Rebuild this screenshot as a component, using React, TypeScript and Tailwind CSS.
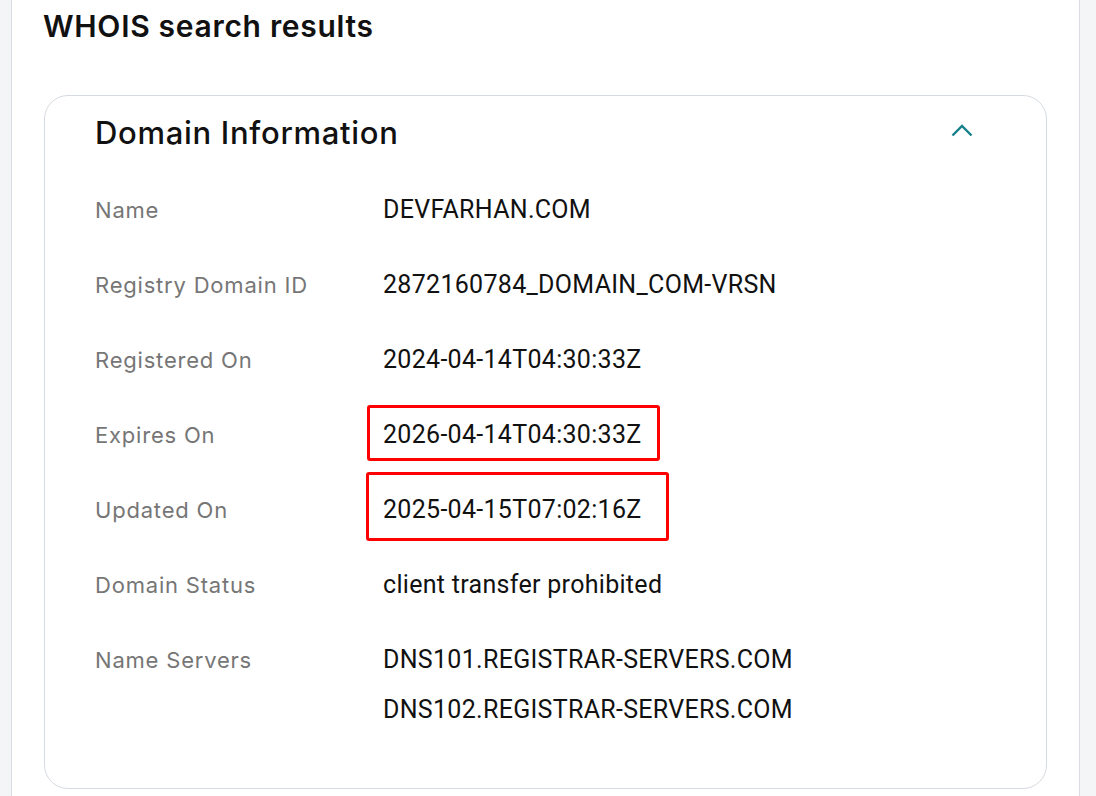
import React from 'react';

const rows: { label: string; value: string[]; box?: 'a' | 'b' }[] = [
  { label: 'Name', value: ['DEVFARHAN.COM'] },
  { label: 'Registry Domain ID', value: ['2872160784_DOMAIN_COM-VRSN'] },
  { label: 'Registered On', value: ['2024-04-14T04:30:33Z'] },
  { label: 'Expires On', value: ['2026-04-14T04:30:33Z'], box: 'a' },
  { label: 'Updated On', value: ['2025-04-15T07:02:16Z'], box: 'b' },
  { label: 'Domain Status', value: ['client transfer prohibited'] },
  { label: 'Name Servers', value: ['DNS101.REGISTRAR-SERVERS.COM', 'DNS102.REGISTRAR-SERVERS.COM'] },
];

const sans = "font-['Inter',sans-serif]";
const mono = "font-['Roboto',Arial,sans-serif]";

export default function App() {
  return (
    <div className="min-h-screen flex bg-[#f4f5f7] pl-[11px] pr-[16px]">
      <div className="flex-1 bg-white border-x border-[#d9dde3] px-8 pt-2 pb-10">
        <h1 className={`${sans} -ml-px text-[30px] leading-9 font-semibold tracking-[0.7px] text-[#111]`}>
          WHOIS search results
        </h1>

        <div className="mt-[51px] border border-[#d6dbe1] rounded-3xl pl-[50px] pr-[73px] pt-[17px] pb-[63px]">
          <div className="flex items-center justify-between">
            <h2 className={`${sans} text-[31px] leading-10 font-medium tracking-[0.7px] text-[#111]`}>
              Domain Information
            </h2>
            <svg width="22" height="14" viewBox="0 0 22 14" fill="none" className="mt-[-6px]">
              <polyline points="1.5,12.5 11,3 20.5,12.5" stroke="#15808a" strokeWidth="2.4" />
            </svg>
          </div>

          <div className="mt-[42px] flex flex-col gap-[45px]">
            {rows.map((r) => (
              <div key={r.label} className="grid grid-cols-[288px_1fr]">
                <div className={`${sans} text-[22px] leading-[30px] tracking-[0.8px] text-[#767676]`}>{r.label}</div>
                <div className="flex flex-col gap-5">
                  {r.value.map((v) => (
                    <div key={v} className={`${mono} text-[25px] leading-[30px] tracking-[0.3px] text-[#111]`}>
                      <span className="relative inline-block">
                        {v}
                        {r.box === 'a' && (
                          <span className="absolute -left-4 -top-[15px] w-[293px] h-[56px] border-[3px] border-[#f00] rounded-[3px]" />
                        )}
                        {r.box === 'b' && (
                          <span className="absolute -left-[17px] -top-[23px] w-[303px] h-[69px] border-[3px] border-[#f00] rounded-[3px]" />
                        )}
                      </span>
                    </div>
                  ))}
                </div>
              </div>
            ))}
          </div>
        </div>
      </div>
    </div>
  );
}
